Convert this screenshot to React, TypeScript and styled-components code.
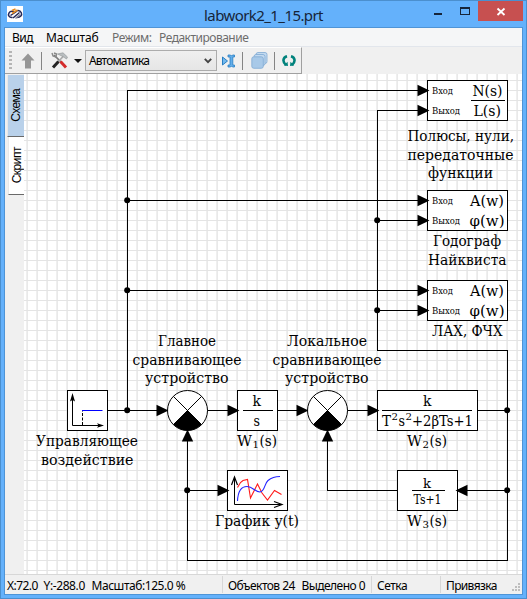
import React from "react";
import styled, { createGlobalStyle } from "styled-components";

const GlobalStyle = createGlobalStyle`
  * { box-sizing: border-box; }
  html, body { margin: 0; padding: 0; }
  body { overflow: hidden; }
`;

const Window = styled.div`
  width: 527px;
  height: 599px;
  display: flex;
  flex-direction: column;
  background: #64b1fb;
  border: 1px solid #4b8fce;
  font-family: "Noto Sans", "Open Sans", sans-serif;
  font-size: 12px;
  color: #000;
`;

const TitleBar = styled.header`
  height: 26px;
  flex: none;
  display: grid;
  grid-template-columns: 197px 1fr 109px;
  padding-left: 6px;
  padding-right: 3px;
`;

const AppIcon = styled.svg`
  width: 16px;
  height: 16px;
  margin-top: 5px;
  background: #fff;
`;

const Title = styled.h1`
  margin: 0;
  font-size: 15px;
  font-weight: 400;
  line-height: 28px;
  letter-spacing: -0.58px;
  color: #16253a;
  white-space: nowrap;
`;

const WindowButtons = styled.div`
  display: flex;
  height: 20px;
`;

const CaptionButton = styled.button<{ $w: number; $close?: boolean }>`
  width: ${(p) => p.$w}px;
  height: 20px;
  padding: 0;
  border: 0;
  flex: none;
  background: ${(p) => (p.$close ? "#c75050" : "transparent")};
  svg { display: block; }
`;

const Client = styled.main`
  flex: 1;
  min-height: 0;
  margin: 0 3px 3px;
  border: 1px solid #4f94d6;
  display: flex;
  flex-direction: column;
  background: #f0f0f0;
`;

const MenuBar = styled.nav`
  height: 19px;
  flex: none;
  display: flex;
  background: #f5f6f7;
  border-bottom: 1px solid #e2e6ec;
  padding-left: 7px;
`;

const MenuItem = styled.span<{ $w: number; $muted?: boolean; $track?: number }>`
  width: ${(p) => p.$w}px;
  flex: none;
  line-height: 19px;
  white-space: nowrap;
  letter-spacing: ${(p) => p.$track ?? 0}px;
  color: ${(p) => (p.$muted ? "#6d6d6d" : "#000")};
`;

const ToolBar = styled.div`
  height: 27px;
  width: 297px;
  flex: none;
  display: flex;
  align-items: center;
  border: 1px solid #a0a0a0;
  border-left: 0;
  border-top-color: #fff;
  padding-left: 4px;
`;

const Grip = styled.div`
  width: 3px;
  height: 20px;
  margin-right: 9px;
  background: repeating-linear-gradient(#b5b5b5 0 2px, transparent 2px 4px);
`;

const ToolIcon = styled.svg<{ $l?: number }>`
  flex: none;
  display: block;
  margin-left: ${(p) => p.$l ?? 0}px;
`;

const ToolDivider = styled.div<{ $l: number }>`
  width: 1px;
  height: 18px;
  margin-left: ${(p) => p.$l}px;
  background: #858585;
`;

const ModeSelect = styled.div`
  width: 132px;
  height: 21px;
  margin-left: 3px;
  flex: none;
  display: flex;
  align-items: center;
  justify-content: space-between;
  padding: 0 4px 0 3px;
  border: 1px solid #acacac;
  background: linear-gradient(#efefef, #e6e6e6);
  letter-spacing: -0.85px;
`;

const Workspace = styled.div`
  flex: 1;
  min-height: 0;
  display: flex;
`;

const TabStrip = styled.div`
  width: 19px;
  flex: none;
  display: flex;
  flex-direction: column;
  align-items: flex-end;
  padding-top: 1px;
`;

const SideTab = styled.div<{ $h: number; $active?: boolean }>`
  width: ${(p) => (p.$active ? 17 : 16)}px;
  height: ${(p) => p.$h}px;
  display: flex;
  align-items: center;
  justify-content: center;
  border-bottom: 1px solid #696969;
  border-left: 1px solid #e8e8e8;
  background: ${(p) => (p.$active ? "#b9d1ea" : "#fff")};
  span {
    writing-mode: vertical-rl;
    transform: rotate(180deg);
    font: 12px/14px "Liberation Sans", sans-serif;
    letter-spacing: ${(p) => (p.$active ? -0.7 : -0.5)}px;
  }
`;

const Canvas = styled.svg`
  display: block;
  flex: none;
  background: #fff;
`;

const Caption = styled.text`
  font-family: "DejaVu Serif Condensed", "DejaVu Serif", serif;
  fill: #000;
`;

const Wire = styled.path`
  fill: none;
  stroke: #000;
  stroke-width: 1;
  shape-rendering: crispEdges;
`;

const Block = styled.rect`
  fill: #fff;
  stroke: #000;
  shape-rendering: crispEdges;
`;

const StatusBar = styled.footer`
  height: 20px;
  flex: none;
  display: flex;
  border-top: 1px solid #d7d7d7;
`;

const StatusCell = styled.div<{ $w: number; $pad: number; $last?: boolean }>`
  width: ${(p) => p.$w}px;
  flex: none;
  display: flex;
  padding-left: ${(p) => p.$pad}px;
  margin: 1px 0;
  border-right: ${(p) => (p.$last ? "0" : "1px solid #d7d7d7")};
  position: relative;
`;

const StatusText = styled.span<{ $w?: number; $track?: number }>`
  flex: none;
  width: ${(p) => (p.$w ? p.$w + "px" : "auto")};
  line-height: 19px;
  white-space: pre;
  letter-spacing: ${(p) => p.$track ?? 0}px;
`;

const SizeGrip = styled.svg`
  position: absolute;
  right: 1px;
  bottom: 1px;
`;

type LabelProps = { x: number; to: number; y: number; size?: number; children: string };

/* Text stretched between two x positions on a baseline */
const Label = ({ x, to, y, size = 14, children }: LabelProps) => (
  <Caption x={x} y={y} fontSize={size} textLength={to - x} lengthAdjust="spacingAndGlyphs">
    {children}
  </Caption>
);

const Arrow = ({ x, y, turn = 0 }: { x: number; y: number; turn?: number }) => (
  <path d="M1 0L-11 -5.7V5.7Z" transform={`translate(${x + 0.5} ${y + 0.5}) rotate(${turn})`} />
);

const Summator = ({ x, y }: { x: number; y: number }) => (
  <g transform={`translate(${x + 0.5} ${y + 0.5})`}>
    <circle r="20" fill="#fff" stroke="#000" />
    <path d="M-14.1 -14.1L14.1 14.1M14.1 -14.1L-14.1 14.1" stroke="#000" />
    <path d="M0 0L14.1 14.1A20 20 0 0 1 -14.1 14.1Z" />
  </g>
);

const Ports = ({ y }: { y: number }) => (
  <>
    <Block x={427.5} y={y + 0.5} width={80} height={40} />
    <Label x={432} to={453} y={y + 14} size={9.5}>Вход</Label>
    <Label x={432} to={460} y={y + 34} size={9.5}>Выход</Label>
    <Arrow x={428} y={y + 10} />
    <Arrow x={428} y={y + 30} />
  </>
);

const W = ({ n, x, y }: { n: string; x: number; y: number }) => (
  <>
    <Label x={x} to={x + 15} y={y}>W</Label>
    <Label x={x + 15.5} to={x + 22} y={y + 1.5} size={10}>{n}</Label>
    <Label x={x + 22.5} to={x + 40} y={y} size={15}>(s)</Label>
  </>
);

const junctions = [[127, 200], [127, 290], [127, 410], [377, 220], [377, 310], [187, 490], [507, 410], [507, 490]];

const wires = [
  "M127.5 410.5V90.5H427", "M127.5 200.5H427", "M127.5 290.5H427",
  "M427 110.5H377.5V350.5H507.5V560.5H187.5V430", "M377.5 220.5H427", "M377.5 310.5H427",
  "M107 410.5H167", "M207 410.5H237", "M277 410.5H307", "M347 410.5H377", "M477 410.5H507",
  "M187 490.5H227", "M507 490.5H457", "M397 490.5H327.5V430",
];

const Scheme = () => (
  <Canvas width={498} height={500} viewBox="24 74 498 500">
    <defs>
      <pattern id="grid" x="7" y="0" width="10" height="10" patternUnits="userSpaceOnUse">
        <rect x="0" y="0" width="1" height="10" fill="#e9e9e9" />
        <rect x="9" y="0" width="1" height="10" fill="#efefef" />
        <rect x="0" y="0" width="10" height="1" fill="#e4e4e4" />
      </pattern>
    </defs>
    <rect x="24" y="74" width="498" height="500" fill="url(#grid)" />
    {wires.map((d) => <Wire key={d} d={d} />)}
    {junctions.map(([x, y]) => <circle key={`${x}-${y}`} cx={x + 0.2} cy={y + 0.2} r="3" />)}

    <Ports y={80} />
    <Label x={472.5} to={502.5} y={95.5} size={15}>N(s)</Label>
    <Wire d="M471 100.5H505" />
    <Label x={473.5} to={501} y={115.5} size={15}>L(s)</Label>
    <Label x={407.5} to={514} y={141}>Полюсы, нули,</Label>
    <Label x={407.5} to={513.5} y={160}>передаточные</Label>
    <Label x={428} to={493} y={178}>функции</Label>

    <Ports y={190} />
    <Label x={470} to={504} y={205.5}>A(w)</Label>
    <Label x={469.5} to={504.5} y={225.5}>φ(w)</Label>
    <Label x={433} to={501} y={246}>Годограф</Label>
    <Label x={428} to={506.5} y={265}>Найквиста</Label>

    <Ports y={280} />
    <Label x={470} to={504} y={295.5}>A(w)</Label>
    <Label x={469.5} to={504.5} y={315.5}>φ(w)</Label>
    <Label x={432} to={502.5} y={336}>ЛАХ, ФЧХ</Label>

    <Block x={67.5} y={390.5} width={40} height={40} />
    <path d="M72.5 396V425.5H102" fill="none" stroke="#000" />
    <path d="M72.5 393L75 401.5L72.5 400L70 401.5ZM104 425.5L97 423.2L98.5 425.5L97 427.8Z" />
    <path d="M82.5 425V411" stroke="#000" strokeDasharray="3 1.5" />
    <path d="M82 410.5H102.5" stroke="#0000ff" />
    <Label x={36} to={138} y={446}>Управляющее</Label>
    <Label x={41} to={133.5} y={465}>воздействие</Label>

    <Summator x={187} y={410} />
    <Label x={158} to={216} y={346}>Главное</Label>
    <Label x={132.5} to={241.5} y={365}>сравнивающее</Label>
    <Label x={145} to={228.5} y={383}>устройство</Label>
    <Arrow x={167} y={410} />
    <Arrow x={187} y={430} turn={-90} />

    <Block x={237.5} y={390.5} width={40} height={40} />
    <Arrow x={238} y={410} />
    <Label x={252.5} to={261} y={406}>k</Label>
    <Wire d="M243 410.5H273" />
    <Label x={253.5} to={260} y={426}>s</Label>
    <W n="1" x={237} y={446} />

    <Summator x={327} y={410} />
    <Label x={287} to={367} y={346}>Локальное</Label>
    <Label x={272.5} to={381.5} y={365}>сравнивающее</Label>
    <Label x={285} to={368.5} y={383}>устройство</Label>
    <Arrow x={307} y={410} />
    <Arrow x={327} y={430} turn={-90} />

    <Block x={377.5} y={390.5} width={100} height={40} />
    <Arrow x={378} y={410} />
    <Label x={423} to={431.5} y={406}>k</Label>
    <Wire d="M382 410.5H472" />
    <Label x={382} to={391} y={426}>T</Label>
    <Label x={391.5} to={398} y={420} size={10}>2</Label>
    <Label x={398.5} to={405} y={426}>s</Label>
    <Label x={405.5} to={412} y={420} size={10}>2</Label>
    <Label x={412} to={473} y={426}>+2βTs+1</Label>
    <W n="2" x={407} y={446} />

    <Block x={397.5} y={470.5} width={60} height={40} />
    <Arrow x={456} y={490} turn={180} />
    <Label x={423} to={431} y={487.5} size={13}>k</Label>
    <Wire d="M412 490.5H445" />
    <Label x={413.5} to={441.5} y={503.5} size={13.5}>Ts+1</Label>
    <W n="3" x={407} y={526} />

    <Block x={227.5} y={470.5} width={60} height={40} />
    <Arrow x={228} y={490} />
    <path d="M234.5 478V504.5H281" fill="none" stroke="#000" />
    <path d="M231.5 485L234.5 477L237.5 485M274 501.5L282 504.5L274 507.5" fill="none" stroke="#000" strokeWidth="1.2" />
    <path d="M237.5 487.5L240.5 482.5L243 480.5L247.5 479.5L250.5 498L257.5 484L262 493L267.5 500L274.5 490.5L281.5 494.5" fill="none" stroke="#ff1a1a" strokeWidth="1.1" />
    <path d="M237.5 501C238 490 242 486.5 247 486.5C253 486.5 255 492 260 492C265 491.5 264 484 268 480.5C271 478 274 476.5 280 476.5" fill="none" stroke="#2525ff" strokeWidth="1.1" />
    <Label x={215} to={299} y={526}>График y(t)</Label>
  </Canvas>
);

const App = () => (
  <Window>
    <GlobalStyle />
    <TitleBar>
      <AppIcon viewBox="0 0 16 16">
        <g fill="none" strokeWidth="1.5">
          <path d="M5.5 11.5C2 12 .8 9 2 7C3 5 5 5 7 5.5M3.5 9.5L9.5 5.5M6 12L12.5 6.5M10 11.5C13.5 11.5 15.3 9 14.3 6.8C13.5 5 11.5 4 9 5" stroke="#252858" />
          <path d="M5 4.5L8.5 3M5 7.5L10.5 4" stroke="#e58a20" />
          <path d="M8.5 12.5L13 8.5" stroke="#858698" />
        </g>
      </AppIcon>
      <Title>labwork2_1_15.prt</Title>
      <WindowButtons>
        <CaptionButton $w={38} aria-label="Свернуть">
          <svg width="38" height="20"><path d="M20 12H28V14H20Z" fill="#16253a" /></svg>
        </CaptionButton>
        <CaptionButton $w={26} aria-label="Развернуть">
          <svg width="26" height="20"><path d="M8 6H18V14H8ZM9 8V13H17V8Z" fillRule="evenodd" fill="#16253a" /></svg>
        </CaptionButton>
        <CaptionButton $w={45} $close aria-label="Закрыть">
          <svg width="45" height="20"><path d="M19.5 7.5L26.5 14M26.5 7.5L19.5 14" stroke="#fff" strokeWidth="1.8" /></svg>
        </CaptionButton>
      </WindowButtons>
    </TitleBar>
    <Client>
      <MenuBar>
        <MenuItem $w={34} $track={-0.5}>Вид</MenuItem>
        <MenuItem $w={66} $track={-0.15}>Масштаб</MenuItem>
        <MenuItem $w={47} $muted $track={-0.5}>Режим:</MenuItem>
        <MenuItem $w={95} $muted $track={-0.5}>Редактирование</MenuItem>
      </MenuBar>
      <ToolBar>
        <Grip />
        <ToolIcon width="14" height="16" viewBox="0 0 14 16"><path d="M7 0.5L13.5 7.5H10V15.5H4V7.5H.5Z" fill="#969696" /></ToolIcon>
        <ToolDivider $l={6} />
        <ToolIcon $l={9} width="17" height="17" viewBox="0 0 17 17">
          <path d="M3 3L14 14" stroke="#777" strokeWidth="1.7" />
          <path d="M1 1L2 4L5 5L5.5 2L3 1" fill="none" stroke="#888" strokeWidth="1.4" />
          <path d="M12.5 4L7 10" stroke="#aaa" strokeWidth="1.8" />
          <path d="M6.5 2L12 .8L16.5 5L15.5 7L11.5 4.3Z" fill="#b9bec0" stroke="#8e9495" strokeWidth=".6" />
          <path d="M7.5 9.5L2 15.5" stroke="#242424" strokeWidth="3" />
          <path d="M9.5 9.5L15 15.5" stroke="#d42c2c" strokeWidth="3" />
        </ToolIcon>
        <ToolIcon $l={6} width="8" height="4"><path d="M0 0H8L4 4Z" fill="#111" /></ToolIcon>
        <ModeSelect>
          Автоматика
          <svg width="8" height="6"><path d="M.8 .8L4 4.2L7.2 .8" fill="none" stroke="#444" strokeWidth="1.9" /></svg>
        </ModeSelect>
        <ToolIcon $l={5} width="13" height="14" viewBox="0 0 13 14">
          <path d="M.5 3L5.5 7L.5 11Z" fill="#72b8ee" stroke="#287fc3" />
          <path d="M6 1H8.5L9.5 2L10.5 1H12.5V3H10.8V11H12.5V13H10.5L9.5 12L8.5 13H6V11H8V3H6Z" fill="#62adea" stroke="#287fc3" strokeWidth=".8" />
        </ToolIcon>
        <ToolDivider $l={7} />
        <ToolIcon $l={8} width="17" height="17" viewBox="0 0 17 17">
          <g stroke="#7fa9d3" fill="#c3daf0" strokeWidth=".8">
            <rect x="5" y=".5" width="11" height="11" rx="2" />
            <rect x="3" y="2.5" width="11" height="11" rx="2" />
            <rect x=".8" y="4.8" width="11.5" height="11.5" rx="2" fill="#a8c9e8" />
          </g>
        </ToolIcon>
        <ToolDivider $l={6} />
        <ToolIcon $l={7} width="14" height="12" viewBox="0 0 14 12">
          <path d="M5 1.2C.6 2.5 .4 7 4 10M9 1.2C13.4 2.5 13.6 7 10 10" fill="none" stroke="#00827c" strokeWidth="2.6" />
          <path d="M2 10.5L6 11L5.5 6.7ZM12 10.5L8 11L8.5 6.7Z" fill="#00827c" />
        </ToolIcon>
      </ToolBar>
      <Workspace>
        <TabStrip>
          <SideTab $h={62} $active><span>Схема</span></SideTab>
          <SideTab $h={58}><span>Скрипт</span></SideTab>
        </TabStrip>
        <Scheme />
      </Workspace>
      <StatusBar>
        <StatusCell $w={218} $pad={2}>
          <StatusText $w={36.5} $track={-0.55}>X:72.0</StatusText>
          <StatusText $w={48} $track={-0.4}>Y:-288.0</StatusText>
          <StatusText $track={-0.45}>Масштаб:125.0 %</StatusText>
        </StatusCell>
        <StatusCell $w={149} $pad={5}>
          <StatusText $w={73.5} $track={-0.55}>Объектов 24</StatusText>
          <StatusText $track={-0.55}>Выделено 0</StatusText>
        </StatusCell>
        <StatusCell $w={69} $pad={5}><StatusText $track={-0.5}>Сетка</StatusText></StatusCell>
        <StatusCell $w={81} $pad={5} $last>
          <StatusText $track={-0.65}>Привязка</StatusText>
          <SizeGrip width="9" height="9">
            <path d="M6 0h2v2H6zM3 3h2v2H3zM6 3h2v2H6zM0 6h2v2H0zM3 6h2v2H3zM6 6h2v2H6z" fill="#bdbdbd" />
          </SizeGrip>
        </StatusCell>
      </StatusBar>
    </Client>
  </Window>
);

export default App;
